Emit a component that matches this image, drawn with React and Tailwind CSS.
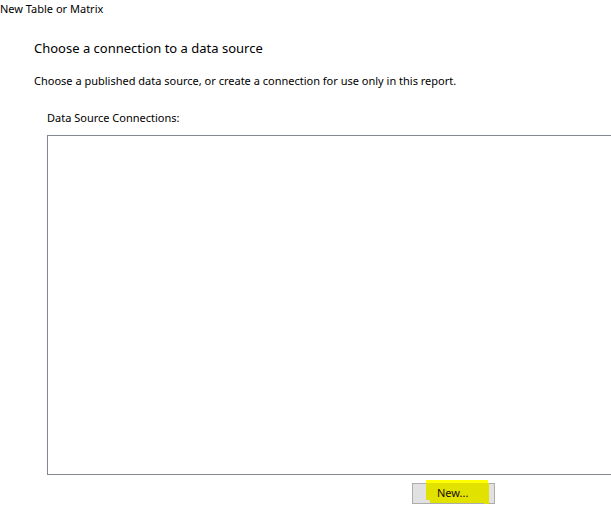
export default function App() {
  return (
    <div className="relative w-[611px] h-[530px] overflow-hidden bg-white text-black font-['Noto_Sans',sans-serif]">
      <div className="pt-[1px] text-[11px] leading-4 whitespace-nowrap">New Table or Matrix</div>
      <div className="pl-[34px] pt-[21px] text-[13px] leading-5 whitespace-nowrap">Choose a connection to a data source</div>
      <div className="pl-[34px] pt-[15px] text-[11px] leading-4 whitespace-nowrap">Choose a published data source, or create a connection for use only in this report.</div>
      <div className="pl-[47px] pt-[21px] text-[11px] leading-4 whitespace-nowrap">Data Source Connections:</div>
      <div className="ml-[47px] mt-[9px] h-[340px] w-[600px] border border-[#828790] bg-white"></div>
      <div className="relative ml-[412px] mt-[8px] flex h-[21px] w-[83px] items-center border border-[#adadad] bg-[#e1e1e1] text-[11px]">
        <svg className="absolute left-[13px] top-[-4px]" width="64" height="24" viewBox="0 0 64 24">
          <polygon points="0,0 62,0 62,3 63,3 63,24 58,24 58,23 4,23 4,20 0,20" fill="#e2e200" />
          <polygon points="0,0 62,0 62,3 0,3" fill="#ffff00" />
        </svg>
        <span className="relative z-10 pl-[24px] text-[#1a0a00]">New...</span>
      </div>
    </div>
  );
}
